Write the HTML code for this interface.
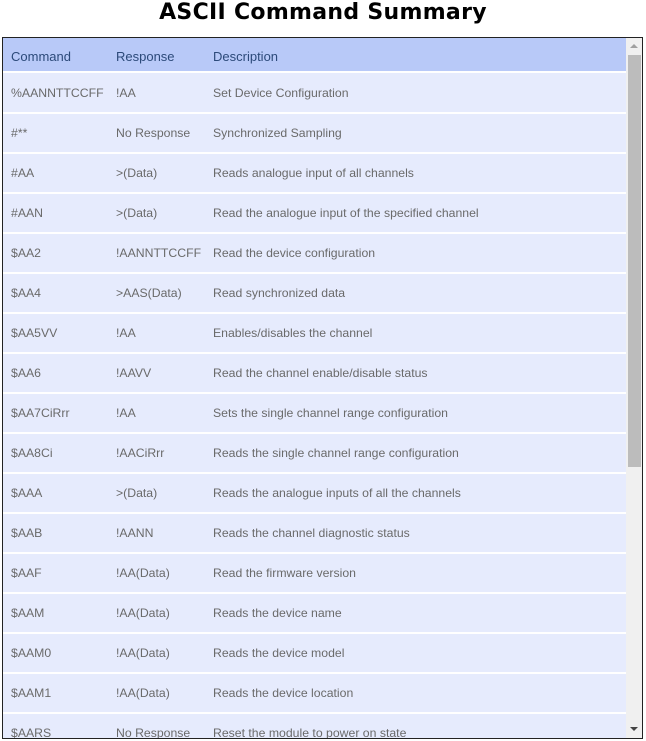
<!DOCTYPE html>
<html><head><style>
body{margin:0;width:646px;height:741px;background:#fff;overflow:hidden;font-family:"Liberation Sans",Arial,sans-serif}
h1{margin:0;position:absolute;top:0;left:0;width:646px;text-align:center;font:bold 22px "DejaVu Sans",Verdana,sans-serif;line-height:25px;color:#000;letter-spacing:0.3px}
.box{position:absolute;left:2px;top:37px;width:639px;height:700px;border:1px solid #222;overflow:hidden;background:#e6ebfd}
.row{position:absolute;left:0;width:623px;height:39px;border-bottom:2px solid #fff;font-size:12.25px;color:#6a6a6a;line-height:41px}
.row span{position:absolute;top:0}
.hd{background:#b8c9f8;color:#2c4a7a;font-size:13px;height:33px;line-height:37px;border-bottom:2px solid #fff}
.c1{left:8px}.c2{left:113px}.c3{left:210px}
.sb{position:absolute;right:0;top:0;width:16px;height:700px;background:#f0f0f0}
.th{position:absolute;left:2px;top:17px;width:13px;height:412px;background:#bcbcbc}
.ar{position:absolute;left:4px;width:0;height:0;border-left:4px solid transparent;border-right:4px solid transparent}
</style></head><body>
<h1>ASCII Command Summary</h1>
<div class="box">
<div class="row hd" style="top:0"><span class="c1">Command</span><span class="c2">Response</span><span class="c3">Description</span></div>
<div class="row" style="top:35px"><span class="c1">%AANNTTCCFF</span><span class="c2">!AA</span><span class="c3">Set Device Configuration</span></div>
<div class="row" style="top:75px"><span class="c1">#**</span><span class="c2">No Response</span><span class="c3">Synchronized Sampling</span></div>
<div class="row" style="top:115px"><span class="c1">#AA</span><span class="c2">&gt;(Data)</span><span class="c3">Reads analogue input of all channels</span></div>
<div class="row" style="top:155px"><span class="c1">#AAN</span><span class="c2">&gt;(Data)</span><span class="c3">Read the analogue input of the specified channel</span></div>
<div class="row" style="top:195px"><span class="c1">$AA2</span><span class="c2">!AANNTTCCFF</span><span class="c3">Read the device configuration</span></div>
<div class="row" style="top:235px"><span class="c1">$AA4</span><span class="c2">&gt;AAS(Data)</span><span class="c3">Read synchronized data</span></div>
<div class="row" style="top:275px"><span class="c1">$AA5VV</span><span class="c2">!AA</span><span class="c3">Enables/disables the channel</span></div>
<div class="row" style="top:315px"><span class="c1">$AA6</span><span class="c2">!AAVV</span><span class="c3">Read the channel enable/disable status</span></div>
<div class="row" style="top:355px"><span class="c1">$AA7CiRrr</span><span class="c2">!AA</span><span class="c3">Sets the single channel range configuration</span></div>
<div class="row" style="top:395px"><span class="c1">$AA8Ci</span><span class="c2">!AACiRrr</span><span class="c3">Reads the single channel range configuration</span></div>
<div class="row" style="top:435px"><span class="c1">$AAA</span><span class="c2">&gt;(Data)</span><span class="c3">Reads the analogue inputs of all the channels</span></div>
<div class="row" style="top:475px"><span class="c1">$AAB</span><span class="c2">!AANN</span><span class="c3">Reads the channel diagnostic status</span></div>
<div class="row" style="top:515px"><span class="c1">$AAF</span><span class="c2">!AA(Data)</span><span class="c3">Read the firmware version</span></div>
<div class="row" style="top:555px"><span class="c1">$AAM</span><span class="c2">!AA(Data)</span><span class="c3">Reads the device name</span></div>
<div class="row" style="top:595px"><span class="c1">$AAM0</span><span class="c2">!AA(Data)</span><span class="c3">Reads the device model</span></div>
<div class="row" style="top:635px"><span class="c1">$AAM1</span><span class="c2">!AA(Data)</span><span class="c3">Reads the device location</span></div>
<div class="row" style="top:675px"><span class="c1">$AARS</span><span class="c2">No Response</span><span class="c3">Reset the module to power on state</span></div>
<div class="sb"><div class="ar" style="top:6px;border-bottom:4px solid #a0a0a0"></div><div class="th"></div><div class="ar" style="top:689px;border-top:4px solid #444"></div></div>
</div>
</body></html>
